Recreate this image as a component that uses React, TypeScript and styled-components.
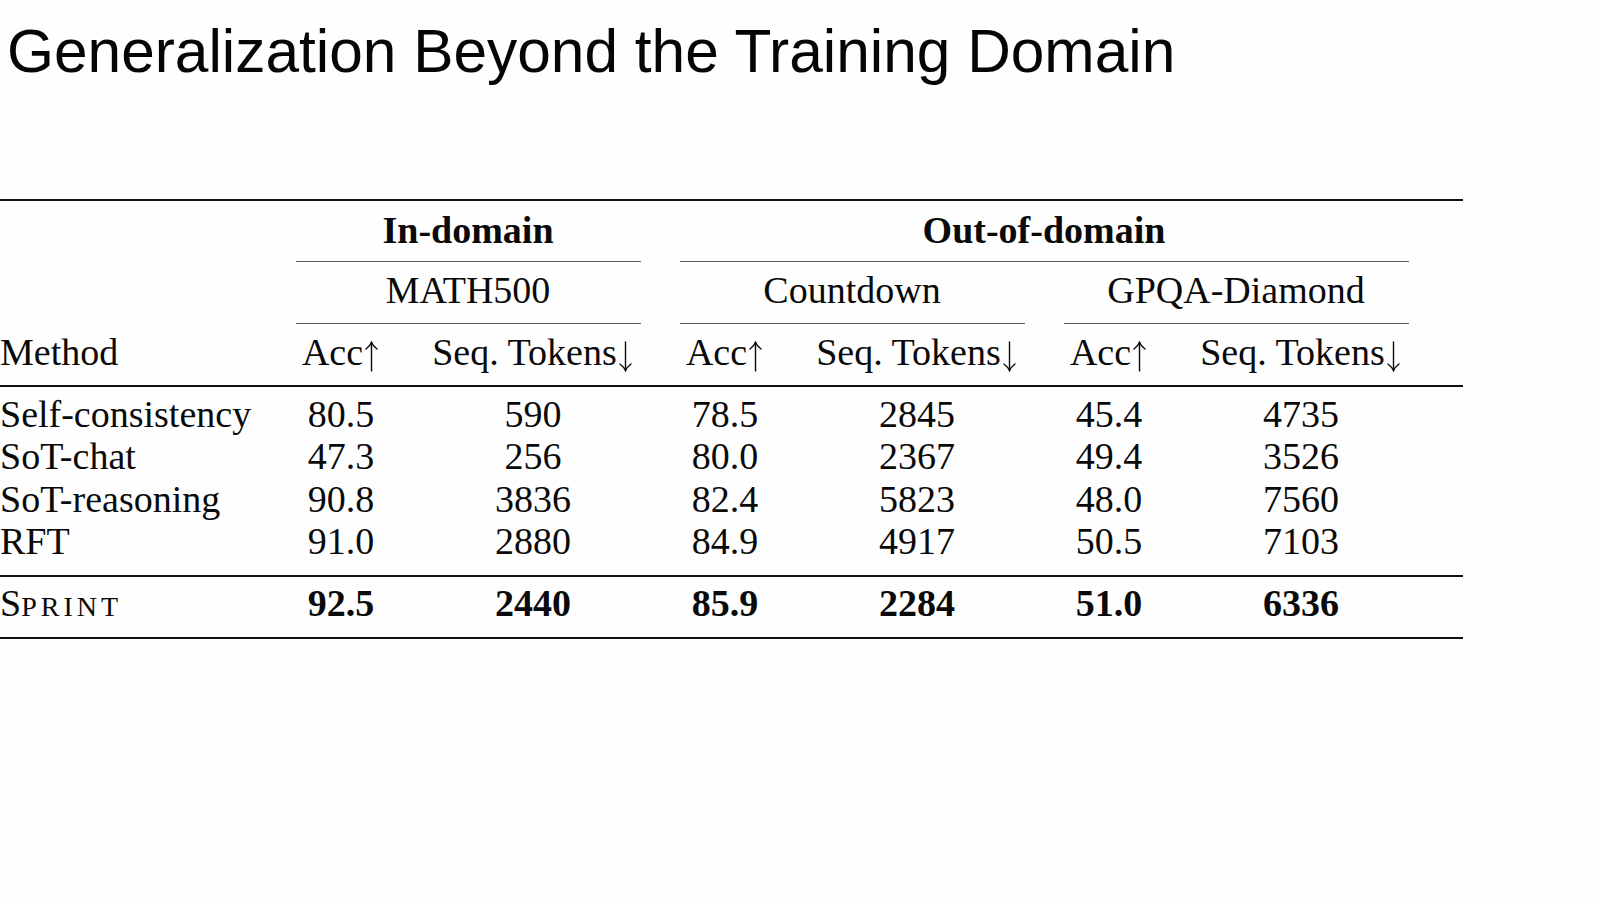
import React from "react";
import styled, { createGlobalStyle } from "styled-components";

const Global = createGlobalStyle`
  html, body { margin: 0; padding: 0; background: #fefefe; }
  body { width: 1600px; height: 899px; overflow: hidden; }
`;

const Page = styled.div`
  display: flex;
  flex-direction: column;
  width: 1600px;
  height: 899px;
  background: #fefefe;
  color: #0a0a0a;
`;

const Title = styled.h1`
  margin: 0;
  padding: 17px 0 0 7px;
  font-family: "Liberation Sans", Arial, sans-serif;
  font-weight: 400;
  font-size: 60.4px;
  line-height: 68px;
  color: #050505;
`;

const Table = styled.div`
  margin-top: 113.5px;
  width: 1463px;
  font-family: "Liberation Serif", "Times New Roman", serif;
  font-size: 38px;
  line-height: 42.3px;
  color: #0a0a0a;
`;

const Rule = styled.div<{ $h: number }>`
  height: ${(p) => p.$h}px;
  background: #111;
`;

const Row = styled.div<{ $pt: number; $pb: number }>`
  display: grid;
  grid-template-columns: 276px repeat(3, 130px 254px) 1fr;
  padding-top: ${(p) => p.$pt}px;
  padding-bottom: ${(p) => p.$pb}px;
`;

const Body = styled.div<{ $pt: number; $pb: number }>`
  display: flex;
  flex-direction: column;
  padding-top: ${(p) => p.$pt}px;
  padding-bottom: ${(p) => p.$pb}px;
`;

const BodyRow = styled.div`
  display: grid;
  grid-template-columns: 276px repeat(3, 130px 254px) 1fr;
`;

const GroupCell = styled.div<{ $start: number; $span: number; $bold?: boolean; $pb: number }>`
  grid-column: ${(p) => p.$start} / span ${(p) => p.$span};
  margin: 0 19.5px;
  padding-bottom: ${(p) => p.$pb}px;
  border-bottom: 1px solid #5a5a5a;
  text-align: center;
  font-weight: ${(p) => (p.$bold ? 700 : 400)};
  white-space: nowrap;
`;

const MethodCell = styled.div`
  grid-column: 1;
  white-space: nowrap;
  height: 42.3px;
`;

const SmallCaps = styled.span`
  font-size: 28px;
  line-height: 0;
  letter-spacing: 4px;
  text-transform: uppercase;
`;

const NumCell = styled.div<{ $bold?: boolean }>`
  text-align: center;
  white-space: nowrap;
  height: 42.3px;
  font-weight: ${(p) => (p.$bold ? 700 : 400)};
`;

const ArrowSvg = styled.svg`
  display: inline-block;
  width: 17px;
  height: 31px;
  vertical-align: -7px;
`;

const Empty = styled.div``;

function Arrow({ up }: { up: boolean }) {
  return (
    <ArrowSvg viewBox="0 0 17 31" fill="none" stroke="#0a0a0a" strokeWidth={1.4} strokeLinecap="round">
      {up ? (
        <>
          <path d="M8.5 1.5 V30" />
          <path d="M3 8 Q7 5 8.5 1.2 Q10 5 14 8" />
        </>
      ) : (
        <>
          <path d="M8.5 1 V29.5" />
          <path d="M3 23 Q7 26 8.5 29.8 Q10 26 14 23" />
        </>
      )}
    </ArrowSvg>
  );
}

type Result = { name: string; values: string[] };

const rows: Result[] = [
  { name: "Self-consistency", values: ["80.5", "590", "78.5", "2845", "45.4", "4735"] },
  { name: "SoT-chat", values: ["47.3", "256", "80.0", "2367", "49.4", "3526"] },
  { name: "SoT-reasoning", values: ["90.8", "3836", "82.4", "5823", "48.0", "7560"] },
  { name: "RFT", values: ["91.0", "2880", "84.9", "4917", "50.5", "7103"] },
];

const sprint = ["92.5", "2440", "85.9", "2284", "51.0", "6336"];

const metricHeaders: { label: string; up: boolean }[] = [
  { label: "Acc", up: true },
  { label: "Seq. Tokens", up: false },
  { label: "Acc", up: true },
  { label: "Seq. Tokens", up: false },
  { label: "Acc", up: true },
  { label: "Seq. Tokens", up: false },
];

export default function App() {
  return (
    <Page>
      <Global />
      <Title>Generalization Beyond the Training Domain</Title>
      <Table>
        <Rule $h={2} />
        <Row $pt={8.7} $pb={0}>
          <GroupCell $start={2} $span={2} $bold $pb={10}>
            In-domain
          </GroupCell>
          <GroupCell $start={4} $span={4} $bold $pb={10}>
            Out-of-domain
          </GroupCell>
        </Row>
        <Row $pt={6.7} $pb={0}>
          <GroupCell $start={2} $span={2} $pb={12}>
            MATH500
          </GroupCell>
          <GroupCell $start={4} $span={2} $pb={12}>
            Countdown
          </GroupCell>
          <GroupCell $start={6} $span={2} $pb={12}>
            GPQA-Diamond
          </GroupCell>
        </Row>
        <Row $pt={6.7} $pb={11.75}>
          <MethodCell>Method</MethodCell>
          {metricHeaders.map((h, i) => (
            <NumCell key={i}>
              {h.label}
              <Arrow up={h.up} />
            </NumCell>
          ))}
          <Empty />
        </Row>
        <Rule $h={1.5} />
        <Body $pt={6.45} $pb={13}>
          {rows.map((r) => (
            <BodyRow key={r.name}>
              <MethodCell>{r.name}</MethodCell>
              {r.values.map((v, i) => (
                <NumCell key={i}>{v}</NumCell>
              ))}
              <Empty />
            </BodyRow>
          ))}
        </Body>
        <Rule $h={1.5} />
        <Row $pt={5.2} $pb={12.5}>
          <MethodCell>
            S<SmallCaps>print</SmallCaps>
          </MethodCell>
          {sprint.map((v, i) => (
            <NumCell key={i} $bold>
              {v}
            </NumCell>
          ))}
          <Empty />
        </Row>
        <Rule $h={2} />
      </Table>
    </Page>
  );
}
